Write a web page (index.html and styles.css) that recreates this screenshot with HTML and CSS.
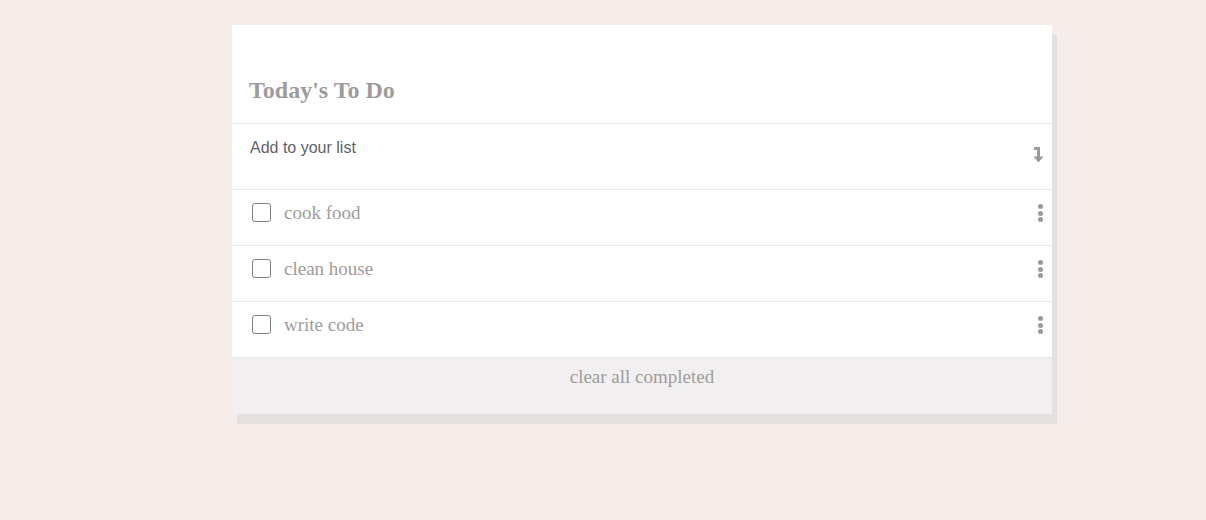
FILE: index.html
```html
<!DOCTYPE html>
<html>
<head>
<meta charset="utf-8">
<link rel="stylesheet" href="styles.css">
</head>
<body>
<div class="card">
  <div class="header"><h1 class="title">Today's To Do</h1></div>
  <div class="add-row">
    <span class="add-text">Add to your list</span>
    <svg class="enter" width="12" height="17" viewBox="0 0 12 17"><path d="M1 1.5H5.5V10" fill="none" stroke="#9a9a9a" stroke-width="3"/><path d="M0.5 9.5H10.5L5.5 15.5Z" fill="#9a9a9a"/></svg>
  </div>
  <div class="item"><span class="box"></span><span class="label">cook food</span><span class="kebab"><i></i><i></i><i></i></span></div>
  <div class="item"><span class="box"></span><span class="label">clean house</span><span class="kebab"><i></i><i></i><i></i></span></div>
  <div class="item"><span class="box"></span><span class="label">write code</span><span class="kebab"><i></i><i></i><i></i></span></div>
  <div class="footer">clear all completed</div>
</div>
</body>
</html>
```
FILE: styles.css
```css
html, body { margin: 0; padding: 0; }
body {
  background: #f6ecea;
  width: 1206px;
  height: 520px;
  font-family: "Liberation Serif", serif;
}
.card {
  margin: 25px 0 0 232px;
  width: 820px;
  background: #fff;
  box-shadow: 5px 10px 0 #e3e0df;
}
.header {
  height: 98px;
  border-bottom: 1px solid #e8e8e8;
  display: flex;
  align-items: flex-end;
  padding-left: 17px;
}
.title {
  margin: 0 0 21px 0;
  font-size: 24px;
  font-weight: bold;
  color: #a09b9b;
  line-height: 1;
}
.add-row {
  height: 65px;
  border-bottom: 1px solid #e8e8e8;
  display: flex;
  justify-content: space-between;
  padding: 0 7px 0 18px;
}
.add-text {
  font-family: "Liberation Sans", sans-serif;
  font-size: 16px;
  color: #62606c;
  margin-top: 15px;
}
.enter { margin-top: 23px; }
.item {
  border-bottom: 1px solid #e8e8e8;
  display: flex;
  align-items: flex-start;
  padding: 13px 9px 0 20px;
  box-sizing: border-box;
  height: 56px;
}
.box {
  width: 17px;
  height: 17px;
  border: 1.3px solid #808080;
  border-radius: 3px;
  margin-right: 13px;
}
.label {
  flex: 1;
  font-size: 19px;
  line-height: 20px;
  color: #a09c9c;
}
.kebab {
  display: flex;
  flex-direction: column;
  gap: 1.5px;
  margin-top: 1px;
}
.kebab i {
  width: 5px;
  height: 5px;
  border-radius: 50%;
  background: #9a9a9e;
}
.footer {
  height: 56px;
  background: #f2eff0;
  text-align: center;
  font-size: 19px;
  color: #a09c9c;
  padding-top: 8px;
  box-sizing: border-box;
}
```
